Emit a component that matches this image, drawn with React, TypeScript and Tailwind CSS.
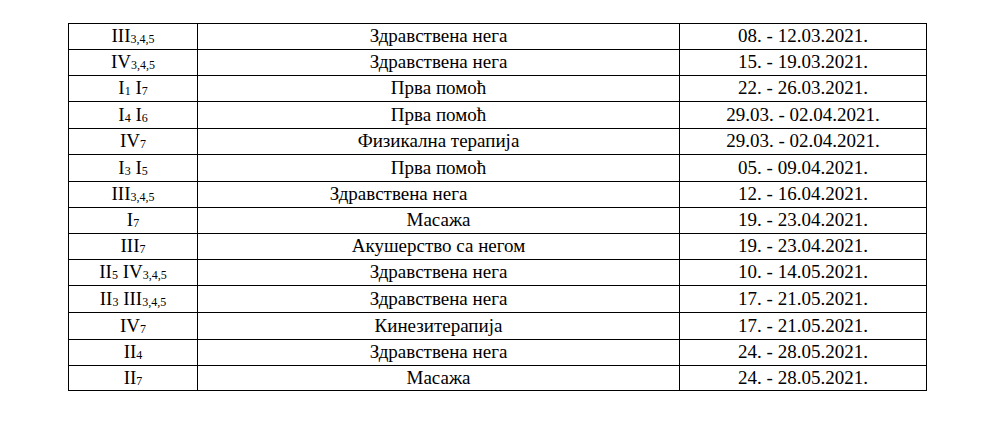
import React from "react";

type Part = { t: string; sub?: boolean };

const rows: { g: Part[]; subj: string; date: string; h: number; shift?: boolean }[] = [
  { g: [{ t: "III" }, { t: "3,4,5", sub: true }], subj: "Здравствена нега", date: "08. - 12.03.2021.", h: 26 },
  { g: [{ t: "IV" }, { t: "3,4,5", sub: true }], subj: "Здравствена нега", date: "15. - 19.03.2021.", h: 26 },
  { g: [{ t: "I" }, { t: "1", sub: true }, { t: " I" }, { t: "7", sub: true }], subj: "Прва помоћ", date: "22. - 26.03.2021.", h: 26 },
  { g: [{ t: "I" }, { t: "4", sub: true }, { t: " I" }, { t: "6", sub: true }], subj: "Прва помоћ", date: "29.03. - 02.04.2021.", h: 27 },
  { g: [{ t: "IV" }, { t: "7", sub: true }], subj: "Физикална терапија", date: "29.03. - 02.04.2021.", h: 26 },
  { g: [{ t: "I" }, { t: "3", sub: true }, { t: " I" }, { t: "5", sub: true }], subj: "Прва помоћ", date: "05. - 09.04.2021.", h: 27 },
  { g: [{ t: "III" }, { t: "3,4,5", sub: true }], subj: "Здравствена нега", date: "12. - 16.04.2021.", h: 26, shift: true },
  { g: [{ t: "I" }, { t: "7", sub: true }], subj: "Масажа", date: "19. - 23.04.2021.", h: 26 },
  { g: [{ t: "III" }, { t: "7", sub: true }], subj: "Акушерство са негом", date: "19. - 23.04.2021.", h: 26 },
  { g: [{ t: "II" }, { t: "5", sub: true }, { t: " IV" }, { t: "3,4,5", sub: true }], subj: "Здравствена нега", date: "10. - 14.05.2021.", h: 26 },
  { g: [{ t: "II" }, { t: "3", sub: true }, { t: " III" }, { t: "3,4,5", sub: true }], subj: "Здравствена нега", date: "17. - 21.05.2021.", h: 27 },
  { g: [{ t: "IV" }, { t: "7", sub: true }], subj: "Кинезитерапија", date: "17. - 21.05.2021.", h: 27 },
  { g: [{ t: "II" }, { t: "4", sub: true }], subj: "Здравствена нега", date: "24. - 28.05.2021.", h: 26 },
  { g: [{ t: "II" }, { t: "7", sub: true }], subj: "Масажа", date: "24. - 28.05.2021.", h: 25 },
];

export default function App() {
  return (
    <div
      className="w-[987px] h-[425px] bg-white pt-[23px] pl-[68px] text-black text-[19px]"
      style={{ fontFamily: '"Liberation Serif", "Times New Roman", serif' }}
    >
      <div className="w-[859px] border-l border-t border-black flex flex-col">
        {rows.map((r, i) => (
          <div key={i} className="flex" style={{ height: r.h }}>
            <div className="w-[129px] border-r border-b border-black flex items-center justify-center whitespace-pre">
              <span>
                {r.g.map((p, j) =>
                  p.sub ? (
                    <span key={j} className="text-[12px] relative top-[1px]">
                      {p.t}
                    </span>
                  ) : (
                    <span key={j}>{p.t}</span>
                  )
                )}
              </span>
            </div>
            <div
              className={
                "w-[482px] border-r border-b border-black flex items-center justify-center" +
                (r.shift ? " pr-[80px]" : "")
              }
            >
              {r.subj}
            </div>
            <div className="w-[247px] border-r border-b border-black flex items-center justify-center">
              {r.date}
            </div>
          </div>
        ))}
      </div>
    </div>
  );
}
